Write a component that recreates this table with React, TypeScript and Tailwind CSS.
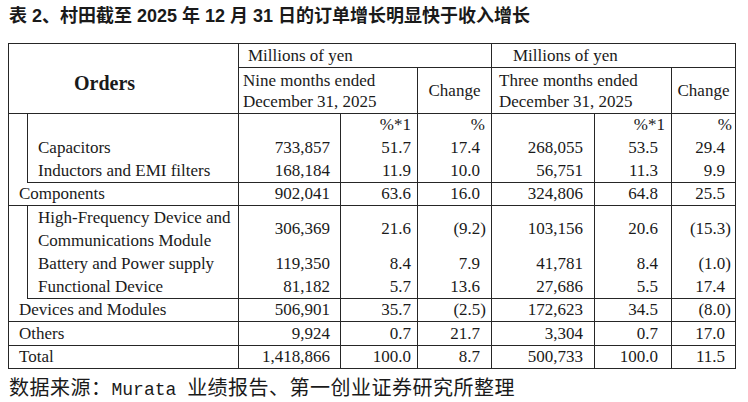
import React from 'react';

type Row = {
  label: React.ReactNode;
  values: string[];
  tall?: boolean;
};

// right padding per numeric column, taken from the picture
const numPad = ['pr-[10px]', 'pr-[6px]', 'pr-[5px]', 'pr-[11px]', 'pr-[13px]', 'pr-[4px]'];
// columns where negative values sit in parentheses
const parenCols = [2, 5];

const group1: Row[] = [
  { label: 'Capacitors', values: ['733,857', '51.7', '17.4', '268,055', '53.5', '29.4'] },
  { label: 'Inductors and EMI filters', values: ['168,184', '11.9', '10.0', '56,751', '11.3', '9.9'] },
];

const group2: Row[] = [
  {
    label: (
      <>
        High-Frequency Device and
        <br />
        Communications Module
      </>
    ),
    values: ['306,369', '21.6', '(9.2)', '103,156', '20.6', '(15.3)'],
    tall: true,
  },
  { label: 'Battery and Power supply', values: ['119,350', '8.4', '7.9', '41,781', '8.4', '(1.0)'] },
  { label: 'Functional Device', values: ['81,182', '5.7', '13.6', '27,686', '5.5', '17.4'] },
];

const line = 'border-[#262626]';

function NumCells({ values, bottom }: { values: string[]; bottom?: boolean }) {
  return (
    <>
      {values.map((v, i) => {
        const needsPad = parenCols.includes(i) && !v.startsWith('(');
        return (
          <td
            key={i}
            className={`border-x ${line} text-right ${numPad[i]} ${bottom ? 'border-b' : ''}`}
          >
            <span className={needsPad ? 'pr-[6px]' : ''}>{v}</span>
          </td>
        );
      })}
    </>
  );
}

function GroupRows({ rows, withUnits }: { rows: Row[]; withUnits?: boolean }) {
  const span = rows.length + (withUnits ? 1 : 0);
  return (
    <>
      {withUnits && (
        <tr className="h-[23px]">
          <td rowSpan={span} className={`border-l ${line}`}></td>
          <td className={`border-l ${line}`}></td>
          <td className={`border-x ${line}`}></td>
          <td className={`border-x ${line} text-right pr-[6px]`}>%*1</td>
          <td className={`border-x ${line} text-right pr-[6px]`}>%</td>
          <td className={`border-x ${line}`}></td>
          <td className={`border-x ${line} text-right pr-[6px]`}>%*1</td>
          <td className={`border-x ${line} text-right pr-[3px]`}>%</td>
        </tr>
      )}
      {rows.map((r, i) => {
        const last = i === rows.length - 1;
        return (
          <tr key={i} className={r.tall ? 'h-[47px]' : 'h-[23px]'}>
            {!withUnits && i === 0 && <td rowSpan={span} className={`border-l ${line}`}></td>}
            <td
              className={`border-l ${line} pl-[10px] whitespace-nowrap ${r.tall ? 'leading-[23px]' : ''} ${
                last ? 'border-b' : ''
              }`}
            >
              {r.label}
            </td>
            <NumCells values={r.values} bottom={last} />
          </tr>
        );
      })}
    </>
  );
}

function TotalRow({ label, values, tall }: { label: string; values: string[]; tall?: boolean }) {
  return (
    <tr className={tall ? 'h-[24px]' : 'h-[23px]'}>
      <td colSpan={2} className={`border-l border-b ${line} pl-[10px]`}>
        {label}
      </td>
      <NumCells values={values} bottom />
    </tr>
  );
}

export default function App() {
  return (
    <div className="w-[748px] h-[402px] bg-white text-[#1a1a1a] overflow-hidden">
      {/* Title */}
      <div
        className="pl-[9px] pt-[5px] h-[43px] text-[18px] leading-[22px] font-bold"
        style={{ fontFamily: '"Liberation Sans", "Noto Sans CJK SC", sans-serif' }}
      >
        表 2、村田截至 2025 年 12 月 31 日的订单增长明显快于收入增长
      </div>

      {/* Table */}
      <div className="pl-[8px]">
        <table
          className="w-[727px] table-fixed border-collapse text-[17px] leading-[22px]"
          style={{ fontFamily: '"Liberation Serif", "Times New Roman", serif' }}
        >
          <colgroup>
            <col className="w-[19px]" />
            <col className="w-[211px]" />
            <col className="w-[102px]" />
            <col className="w-[77px]" />
            <col className="w-[74px]" />
            <col className="w-[103px]" />
            <col className="w-[77px]" />
            <col className="w-[64px]" />
          </colgroup>
          <thead>
            <tr className="h-[24px]">
              <th
                rowSpan={2}
                colSpan={2}
                className={`border ${line} text-left pl-[65px] pt-[8px] text-[20px] font-bold`}
              >
                Orders
              </th>
              <th colSpan={3} className={`border ${line} text-left pl-[9px] font-normal`}>
                Millions of yen
              </th>
              <th colSpan={3} className={`border ${line} text-left pl-[21px] font-normal`}>
                Millions of yen
              </th>
            </tr>
            <tr className="h-[46px]">
              <td colSpan={2} className={`border ${line} pl-[4px] leading-[21px]`}>
                Nine months ended
                <br />
                December 31, 2025
              </td>
              <td className={`border ${line} text-center`}>Change</td>
              <td colSpan={2} className={`border ${line} pl-[7px] leading-[21px]`}>
                Three months ended
                <br />
                December 31, 2025
              </td>
              <td className={`border ${line} text-center`}>Change</td>
            </tr>
          </thead>
          <tbody>
            <GroupRows rows={group1} withUnits />
            <TotalRow label="Components" values={['902,041', '63.6', '16.0', '324,806', '64.8', '25.5']} />
            <GroupRows rows={group2} />
            <TotalRow
              label="Devices and Modules"
              values={['506,901', '35.7', '(2.5)', '172,623', '34.5', '(8.0)']}
            />
            <TotalRow label="Others" values={['9,924', '0.7', '21.7', '3,304', '0.7', '17.0']} tall />
            <TotalRow
              label="Total"
              values={['1,418,866', '100.0', '8.7', '500,733', '100.0', '11.5']}
            />
          </tbody>
        </table>
      </div>

      {/* Source note */}
      <div
        className="pl-[9px] pt-[7px] text-[20px] leading-[22px] tracking-[0.5px]"
        style={{ fontFamily: '"Noto Sans CJK SC", sans-serif' }}
      >
        数据来源：
        <span
          className="text-[18px] tracking-normal"
          style={{ fontFamily: '"Liberation Mono", monospace' }}
        >
          Murata{' '}
        </span>
        业绩报告、第一创业证券研究所整理
      </div>
    </div>
  );
}
